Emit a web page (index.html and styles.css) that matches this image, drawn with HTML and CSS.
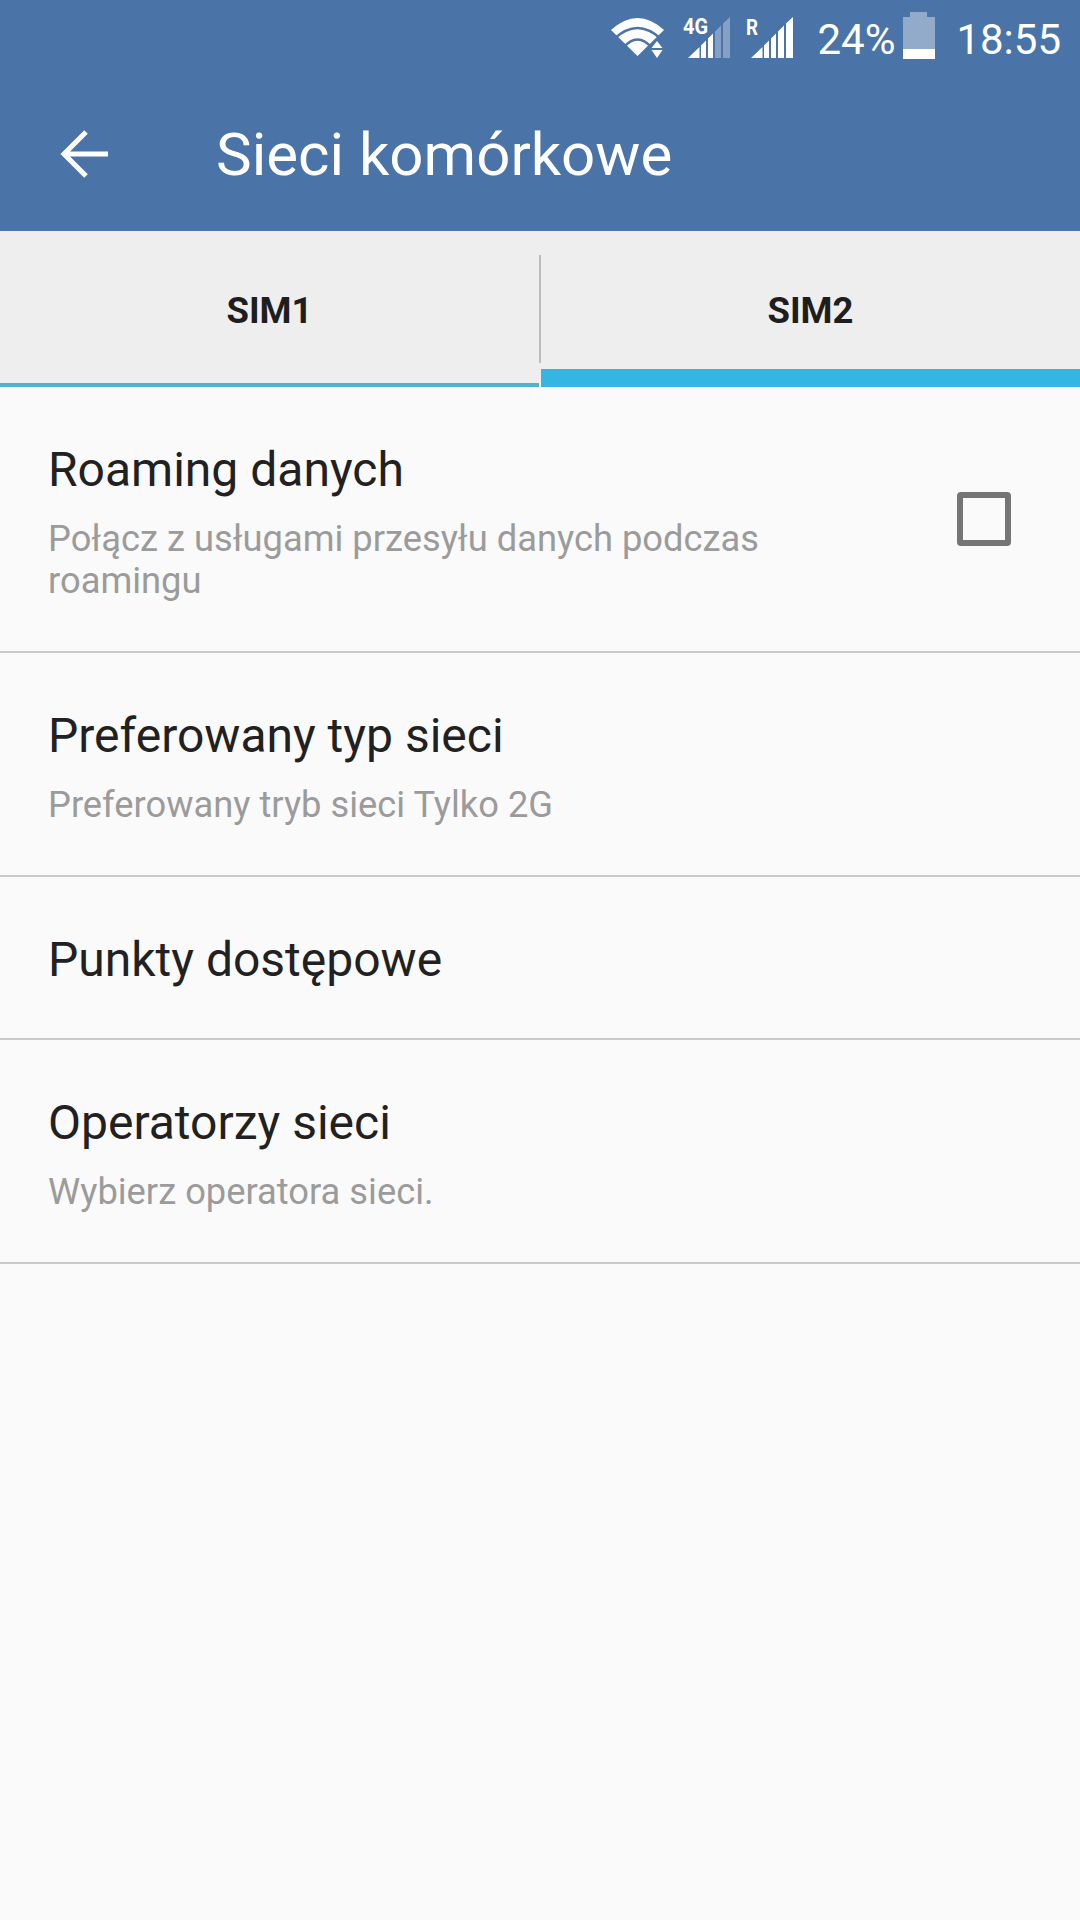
FILE: index.html
```html
<!DOCTYPE html>
<html lang="pl">
<head>
<meta charset="utf-8">
<title>Sieci komórkowe</title>
<link rel="stylesheet" href="styles.css">
</head>
<body>
<div class="screen">
  <header class="appbar">
    <div class="status">
      <svg class="ic-wifi" width="53" height="42" viewBox="0 0 53 42">
        <path fill="#fff" d="M0 12 Q26.500 -12 53 12 L26.500 38 Z"/>
        <path class="wifi-gap" d="M3 21 Q26.500 -1 50 21"/>
        <path class="wifi-gap" d="M12 30 Q26.500 13 41 30"/>
        <path fill="#4a73a8" d="M37 32 L46 21 L55 32 V42 H37 Z"/>
        <path fill="#fff" d="M46 23 L51.500 30 H40.500 Z M40.500 32 H51.500 L46 40 Z"/>
      </svg>
      <svg class="ic-sig ic-4g" width="47" height="48" viewBox="0 -6 47 48">
        <text class="sig-label" x="0" y="17" textLength="25" lengthAdjust="spacingAndGlyphs">4G</text>
        <path fill="#fff" d="M5 41 L16.500 30 V41 Z M18 41 V28.500 L23 23.500 V41 Z M25 41 V21.500 L30 16.500 V41 Z"/>
        <path fill="#fff" fill-opacity=".32" d="M32 41 V14.500 L38 8.500 V41 Z M40 41 V6.500 L47 0 V41 Z"/>
      </svg>
      <svg class="ic-sig ic-r" width="47" height="48" viewBox="0 -6 47 48">
        <text class="sig-label" x="0" y="18" textLength="12" lengthAdjust="spacingAndGlyphs">R</text>
        <path fill="#fff" d="M5 41 L16.500 30 V41 Z M18 41 V28.500 L23 23.500 V41 Z M25 41 V21.500 L30 16.500 V41 Z M32 41 V14.500 L38 8.500 V41 Z M40 41 V6.500 L47 0 V41 Z"/>
      </svg>
      <span class="pct">24%</span>
      <svg class="ic-batt" width="32" height="47" viewBox="0 0 32 47">
        <path fill="#fff" fill-opacity=".4" d="M7 0 H24 V5 H32 V37 H0 V5 H7 Z"/>
        <rect y="37" width="32" height="10" fill="#fff"/>
      </svg>
      <span class="clock">18:55</span>
    </div>
    <div class="toolbar">
      <svg class="ic-back" width="50" height="50" viewBox="0 0 50 50">
        <path d="M48 25 H4 M26 3 L4 25 L26 47" fill="none" stroke="#fff" stroke-width="5"/>
      </svg>
      <h1 class="title">Sieci komórkowe</h1>
    </div>
  </header>
  <nav class="tabs">
    <div class="tab tab-first"><span>SIM1</span></div>
    <div class="tab tab-active"><span>SIM2</span></div>
  </nav>
  <main class="list">
    <section class="row row-check">
      <div class="row-text">
        <div class="row-title">Roaming danych</div>
        <div class="row-sub">Połącz z usługami przesyłu danych podczas roamingu</div>
      </div>
      <div class="check"></div>
    </section>
    <section class="row">
      <div class="row-text">
        <div class="row-title">Preferowany typ sieci</div>
        <div class="row-sub">Preferowany tryb sieci Tylko 2G</div>
      </div>
    </section>
    <section class="row row-single">
      <div class="row-text">
        <div class="row-title">Punkty dostępowe</div>
      </div>
    </section>
    <section class="row">
      <div class="row-text">
        <div class="row-title">Operatorzy sieci</div>
        <div class="row-sub">Wybierz operatora sieci.</div>
      </div>
    </section>
  </main>
</div>
</body>
</html>
```
FILE: styles.css
```css
* { box-sizing: border-box; }
html, body { margin: 0; padding: 0; }
body { font-family: Roboto, "Liberation Sans", sans-serif; background: #fafafa; }
.screen { width: 1080px; height: 1920px; display: flex; flex-direction: column; overflow: hidden; background: #fafafa; }

.appbar { height: 231px; background: #4a73a8; color: #fff; display: flex; flex-direction: column; flex: none; }
.status { height: 76px; display: flex; align-items: flex-start; justify-content: flex-end; padding: 12px 19px 0 0; }
.ic-wifi { margin-top: 6px; margin-right: 19px; overflow: visible; }
.wifi-gap { fill: none; stroke: #4a73a8; stroke-width: 2.6; }
.ic-sig { margin-top: -1px; }
.ic-4g { margin-right: 16px; }
.ic-r { margin-right: 24px; }
.sig-label { fill: #fff; font: 700 22px "Roboto", sans-serif; }
.pct, .clock { font-size: 42px; line-height: 56px; }
.clock { margin-left: 21px; }
.ic-batt { margin-left: 8px; }

.toolbar { display: flex; align-items: center; height: 155px; padding-left: 60px; }
.title { margin: 3px 0 0 106px; font-size: 60px; font-weight: 400; line-height: 72px; }

.tabs { display: flex; height: 156px; flex: none; background: #eeeeee; }
.tab { width: 539px; display: flex; align-items: center; justify-content: center; font-size: 36.5px; font-weight: 700; color: #1e1e1e; position: relative; }
.tab-first { border-bottom: 4px solid #4fb3d1; padding-top: 6px; }
.tab-first::after { content: ""; position: absolute; right: -2px; top: 24px; height: 108px; width: 2px; background: #bdbdbd; }
.tab-first::before { content: ""; position: absolute; right: -2px; bottom: -4px; height: 4px; width: 2px; background: #fafafa; }
.tab-active { border-bottom: 18px solid #35b5e2; padding-top: 20px; margin-left: 2px; }

.list { display: flex; flex-direction: column; }
.row { display: flex; align-items: center; padding: 3px 48px 0; height: 224px; border-bottom: 2px solid #c9c9c9; }
.row-check { height: 266px; justify-content: space-between; padding-right: 69px; }
.row-single { height: 163px; padding-top: 5px; }
.row-text { width: 760px; }
.row-title { font-size: 48px; line-height: 60px; color: #212121; }
.row-sub { font-size: 36.3px; line-height: 42px; color: #9b9b9b; margin-top: 18px; }
.check { width: 54px; height: 54px; margin-top: -3px; border: 6px solid #757575; border-radius: 4px; }
```
